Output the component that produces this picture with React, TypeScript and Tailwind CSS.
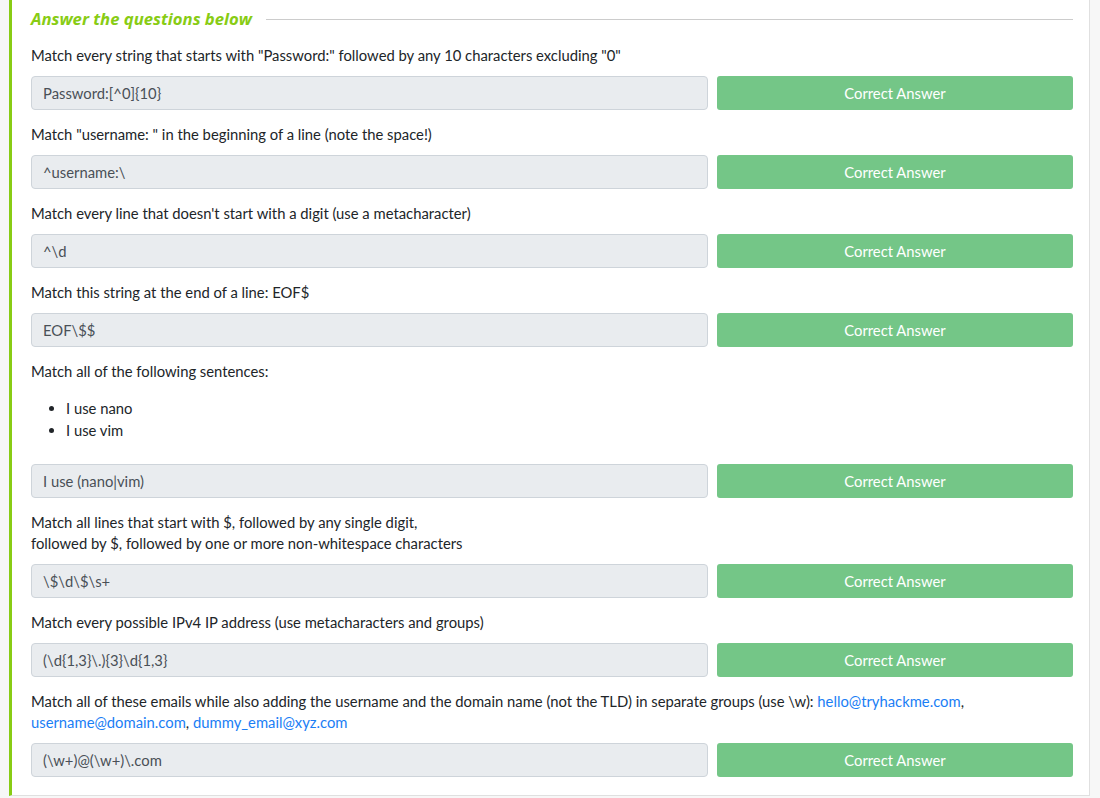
import React from 'react'

type Q = {
    text: React.ReactNode;
    answer: string;
    extra?: React.ReactNode;
}

const link = 'text-[#1a7ef5]'

const questions: Q[] = [
    { text: 'Match every string that starts with "Password:" followed by any 10 characters excluding "0"', answer: 'Password:[^0]{10}' },
    { text: 'Match "username: " in the beginning of a line (note the space!)', answer: '^username:\\' },
    { text: "Match every line that doesn't start with a digit (use a metacharacter)", answer: '^\\d' },
    { text: 'Match this string at the end of a line: EOF$', answer: 'EOF\\$$' },
    {
        text: 'Match all of the following sentences:',
        answer: 'I use (nano|vim)',
        extra: (
            <ul className="list-disc pl-[35px] mt-[15px] mb-[23px] leading-[22px]">
                <li>I use nano</li>
                <li>I use vim</li>
            </ul>
        ),
    },
    {
        text: (
            <>
                Match all lines that start with $, followed by any single digit,
                <br />
                followed by $, followed by one or more non-whitespace characters
            </>
        ),
        answer: '\\$\\d\\$\\s+',
    },
    { text: 'Match every possible IPv4 IP address (use metacharacters and groups)', answer: '(\\d{1,3}\\.){3}\\d{1,3}' },
    {
        text: (
            <>
                Match all of these emails while also adding the username and the domain name (not the TLD) in separate groups (use \w): <span className={link}>hello@tryhackme.com</span>,{' '}
                <span className={link}>username@domain.com</span>, <span className={link}>dummy_email@xyz.com</span>
            </>
        ),
        answer: '(\\w+)@(\\w+)\\.com',
    },
]

const App = () => {
    return (
        <div className="min-h-screen bg-[#f7f7f7] pl-[9px] pr-[10px] pb-[3px] font-['Lato','Liberation_Sans',sans-serif] text-[14.8px] text-[#212529]">
            <div className="bg-white border-l-[3px] border-l-[#88cc14] border-r border-b border-[#e0e0e0] pl-[19px] pr-[16px] pt-[7px] pb-[18px]">
                {/* Heading */}
                <div className="flex items-center gap-[14px] h-[24px]">
                    <h5 className="font-['Open_Sans','Lato',sans-serif] text-[16.7px] font-bold italic text-[#88cc14] whitespace-nowrap">Answer the questions below</h5>
                    <div className="flex-1 h-px bg-[#cccccc]"></div>
                </div>

                <div className="mt-[14px]">
                    {questions.map((q, i) => (
                        <div key={i} className={i === questions.length - 1 ? '' : 'mb-[14px]'}>
                            <p className="leading-[21px] mb-[10px]">{q.text}</p>
                            {q.extra}
                            <div className="grid grid-cols-[677px_1fr] gap-[9px]">
                                <input
                                    readOnly
                                    value={q.answer}
                                    className="h-[34px] px-[11px] bg-[#e9ecef] border border-[#ced4da] rounded-[4px] text-[#495057] outline-none"
                                />
                                <button className="h-[34px] bg-[#74c687] text-white rounded-[3px]">
                                    Correct Answer
                                </button>
                            </div>
                        </div>
                    ))}
                </div>
            </div>
        </div>
    )
}

export default App
